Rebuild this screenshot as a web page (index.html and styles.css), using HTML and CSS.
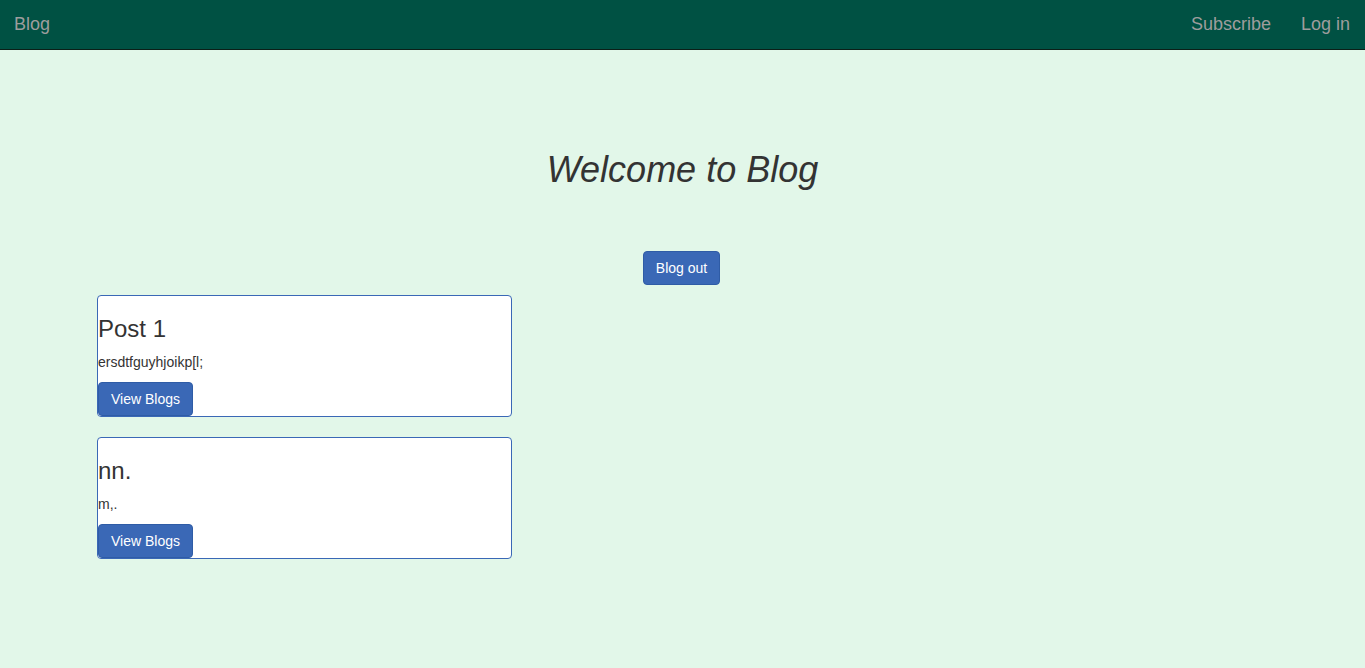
FILE: index.html
```html
<!DOCTYPE html>
<html lang="en">
<head>
<meta charset="utf-8">
<title>Blog</title>
<link rel="stylesheet" href="styles.css">
</head>
<body>
<nav class="navbar">
  <a class="brand" href="#">Blog</a>
  <div class="nav-right">
    <a class="nav-link" href="#">Subscribe</a>
    <a class="nav-link" href="#">Log in</a>
  </div>
</nav>
<main class="main">
  <h1 class="title">Welcome to Blog</h1>
  <div class="center">
    <a class="btn" href="#">Blog out</a>
  </div>
  <div class="posts">
    <div class="card">
      <h3 class="card-title">Post 1</h3>
      <p class="card-text">ersdtfguyhjoikp[l;</p>
      <a class="btn" href="#">View Blogs</a>
    </div>
    <div class="card">
      <h3 class="card-title">nn.</h3>
      <p class="card-text">m,.</p>
      <a class="btn" href="#">View Blogs</a>
    </div>
  </div>
</main>
</body>
</html>
```
FILE: styles.css
```css
* { box-sizing: border-box; }
html, body {
  margin: 0;
  padding: 0;
}
body {
  background: #e2f7e9;
  color: #333333;
  font-family: "Liberation Sans", Arial, Helvetica, sans-serif;
  font-size: 14px;
  line-height: 20px;
  min-height: 668px;
}
a { text-decoration: none; }

.navbar {
  height: 50px;
  background: #005143;
  border-bottom: 1px solid #0b1f18;
  display: flex;
  justify-content: space-between;
  align-items: flex-start;
}
.brand,
.nav-link {
  color: #9d9d9d;
  font-size: 18px;
  line-height: 20px;
  padding: 14px 15px 15px;
  display: block;
}
.brand { padding-left: 14px; }
.nav-right {
  display: flex;
}

.main {
  padding-top: 100px;
}
.title {
  margin: 0;
  text-align: center;
  font-size: 36px;
  font-style: italic;
  font-weight: 400;
  line-height: 40px;
  color: #333333;
}
.center {
  display: flex;
  justify-content: center;
  margin-top: 61px;
  margin-bottom: 10px;
  padding-right: 2px;
}
.btn {
  display: inline-block;
  background: #3a68b6;
  border: 1px solid #2f5ca6;
  border-radius: 4px;
  color: #ffffff;
  font-size: 14px;
  line-height: 20px;
  padding: 6px 12px;
}

.posts {
  margin-left: 97px;
  display: flex;
  flex-direction: column;
  gap: 20px;
}
.card {
  width: 415px;
  background: #ffffff;
  border: 1px solid #3a68b6;
  border-radius: 4px;
  height: 122px;
}
.card-title {
  margin: 20px 0 10px;
  font-size: 24px;
  font-weight: 400;
  line-height: 26.4px;
  color: #333333;
}
.card-text {
  margin: 0 0 10px;
  font-size: 14px;
  line-height: 20px;
  color: #333333;
}
```
